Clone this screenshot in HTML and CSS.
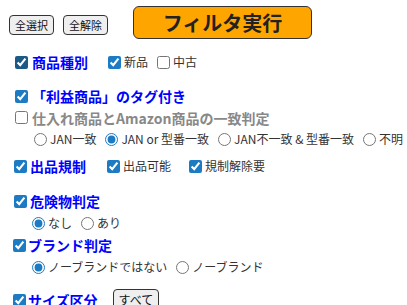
FILE: index.html
```html
<!DOCTYPE html>
<html lang="ja">
<head>
<meta charset="utf-8">
<link rel="stylesheet" href="styles.css">
</head>
<body>
<div class="page">
  <div class="toolbar">
    <button class="btn-small">全選択</button>
    <button class="btn-small">全解除</button>
    <button class="btn-run">フィルタ実行</button>
  </div>

  <div class="row r1">
    <label class="head"><input type="checkbox" class="cb dark" checked><span class="title">商品種別</span></label>
    <label class="opt o-new"><input type="checkbox" class="cb" checked>新品</label>
    <label class="opt o-used"><input type="checkbox" class="cb">中古</label>
  </div>

  <div class="row r2">
    <label class="head"><input type="checkbox" class="cb" checked><span class="title">「利益商品」のタグ付き</span></label>
  </div>

  <div class="row r3">
    <label class="head"><input type="checkbox" class="cb"><span class="title grey">仕入れ商品とAmazon商品の一致判定</span></label>
  </div>

  <div class="row radios r4">
    <label class="opt"><input type="radio" name="match" class="rd">JAN一致</label>
    <label class="opt"><input type="radio" name="match" class="rd" checked>JAN or 型番一致</label>
    <label class="opt"><input type="radio" name="match" class="rd">JAN不一致 &amp; 型番一致</label>
    <label class="opt"><input type="radio" name="match" class="rd">不明</label>
  </div>

  <div class="row r5">
    <label class="head"><input type="checkbox" class="cb" checked><span class="title">出品規制</span></label>
    <label class="opt o-ok"><input type="checkbox" class="cb" checked>出品可能</label>
    <label class="opt o-rel"><input type="checkbox" class="cb" checked>規制解除要</label>
  </div>

  <div class="row r6">
    <label class="head"><input type="checkbox" class="cb" checked><span class="title">危険物判定</span></label>
  </div>

  <div class="row radios r7">
    <label class="opt"><input type="radio" name="danger" class="rd" checked>なし</label>
    <label class="opt"><input type="radio" name="danger" class="rd">あり</label>
  </div>

  <div class="row r8">
    <label class="head"><input type="checkbox" class="cb" checked><span class="title">ブランド判定</span></label>
  </div>

  <div class="row radios r9">
    <label class="opt"><input type="radio" name="brand" class="rd" checked>ノーブランドではない</label>
    <label class="opt"><input type="radio" name="brand" class="rd">ノーブランド</label>
  </div>

  <div class="row r10">
    <label class="head"><input type="checkbox" class="cb" checked><span class="title">サイズ区分</span></label>
    <button class="btn-small btn-all">すべて</button>
  </div>
</div>
</body>
</html>
```

FILE: styles.css
```css
html, body {
  margin: 0;
  padding: 0;
  background: #ffffff;
}

body {
  font-family: "Noto Sans CJK JP", sans-serif;
  color: #333333;
  overflow: hidden;
}

.page {
  width: 407px;
  height: 305px;
  overflow: hidden;
}

.toolbar {
  display: flex;
  align-items: flex-start;
  height: 33px;
  margin-top: 6px;
  padding-left: 9px;
}

.btn-small {
  box-sizing: border-box;
  height: 20px;
  margin-top: 9px;
  padding: 0 5px;
  font-family: "Noto Sans CJK JP", sans-serif;
  font-size: 11px;
  line-height: 18px;
  color: #111111;
  background: #efefef;
  border: 1px solid #333333;
  border-radius: 4px;
}

.btn-small + .btn-small {
  margin-left: 9px;
}

.btn-run {
  box-sizing: border-box;
  width: 179px;
  height: 33px;
  margin-left: 25px;
  padding: 0;
  font-family: "Noto Sans CJK JP", sans-serif;
  font-size: 20px;
  font-weight: bold;
  line-height: 31px;
  color: #222222;
  background: #ffa500;
  border: 1px solid #333333;
  border-radius: 6px;
}

.row {
  display: flex;
  align-items: center;
  height: 22px;
  padding-left: 15px;
}

.r1 { margin-top: 12px; }
.r2 { margin-top: 12px; }
.r3 { height: 21px; }
.r5 { margin-top: 5px; padding-left: 14px; }
.r6 { margin-top: 13px; padding-left: 14px; }
.r8 { padding-left: 13px; }
.r10 { margin-top: 11px; padding-left: 13px; }

.head {
  display: flex;
  align-items: center;
}

input.cb,
input.rd {
  width: 13px;
  height: 13px;
  margin: 0;
  flex: none;
  accent-color: #1d7bc3;
}

input.dark {
  accent-color: #1b5a87;
}

.title {
  margin-left: 4px;
  font-size: 14px;
  font-weight: bold;
  line-height: 20px;
  color: #0000ff;
}

.r5 .title,
.r6 .title {
  margin-left: 3px;
}

.r8 .title,
.r10 .title {
  margin-left: 2px;
}

.title.grey {
  color: #888888;
}

.opt {
  display: flex;
  align-items: center;
  font-size: 12px;
  line-height: 18px;
  color: #333333;
}

.opt input {
  margin-right: 3px;
}

.o-new { margin-left: 20px; }
.o-used { margin-left: 9px; }
.o-ok { margin-left: 21px; }
.o-rel { margin-left: 18px; }

.radios {
  padding-left: 34px;
}

.radios .opt + .opt {
  margin-left: 9px;
}

.r7, .r9 {
  padding-left: 32px;
}

.btn-all {
  margin-top: 0;
  margin-left: 15px;
  height: 22px;
  font-size: 12px;
}
```
